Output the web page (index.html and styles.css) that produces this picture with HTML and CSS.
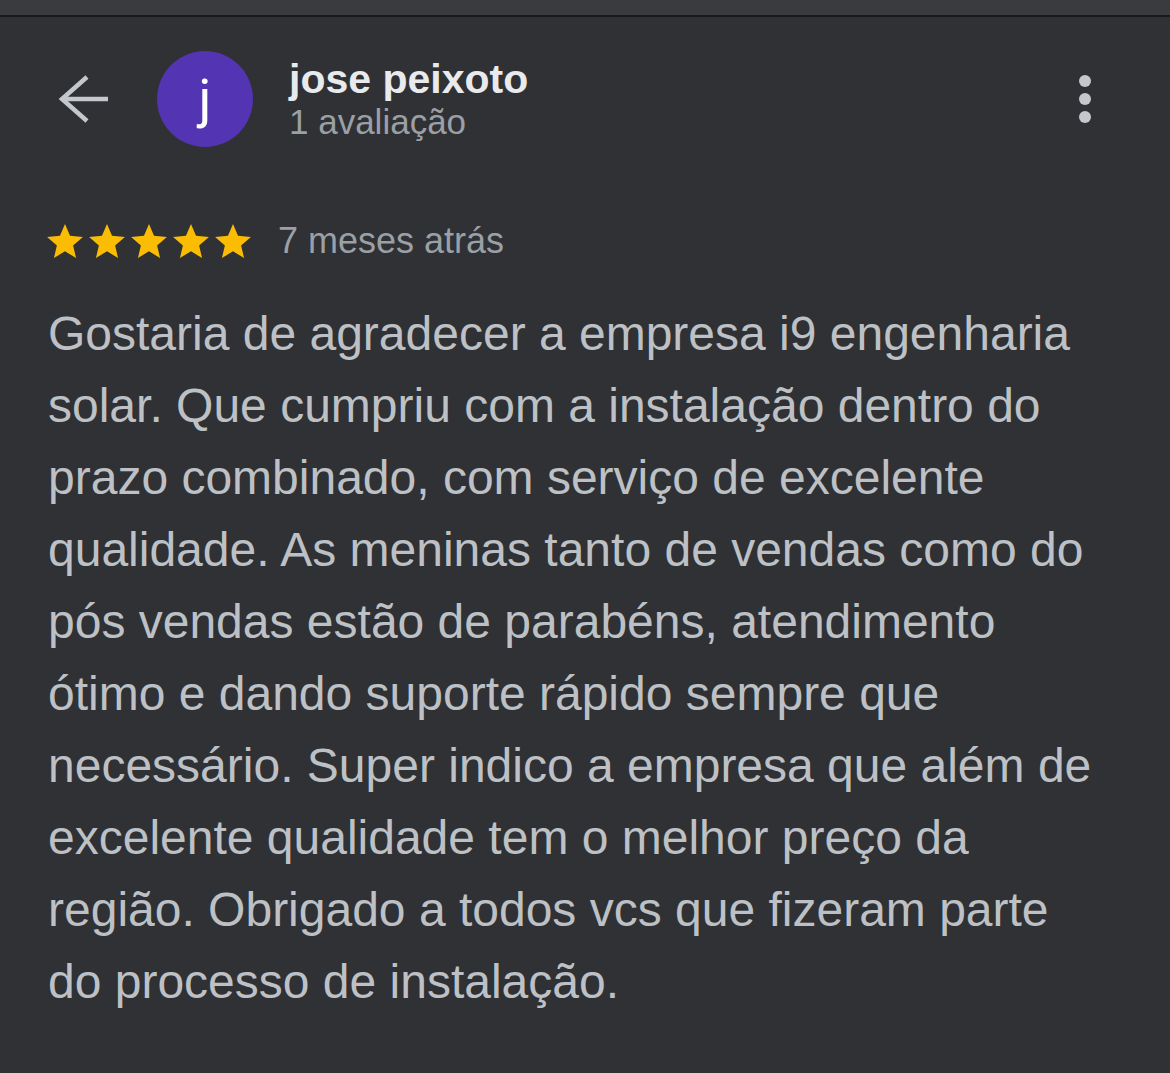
FILE: index.html
```html
<!DOCTYPE html>
<html lang="pt">
<head>
<meta charset="utf-8">
<title>jose peixoto</title>
<link rel="stylesheet" href="styles.css">
</head>
<body>
<div class="topbar"></div>
<header class="header">
  <svg class="back" width="52" height="52" viewBox="0 0 52 52" aria-hidden="true">
    <path d="M50 26 H5" stroke="#c4c7cc" stroke-width="4.5" fill="none"/>
    <path d="M29 4 L4 26 L29 48" stroke="#c4c7cc" stroke-width="4.5" fill="none" stroke-linejoin="miter"/>
  </svg>
  <div class="avatar">j</div>
  <div class="who">
    <div class="name">jose peixoto</div>
    <div class="count">1 avaliação</div>
  </div>
  <div class="menu"><span></span><span></span><span></span></div>
</header>
<div class="meta">
  <div class="stars">
    <svg class="star" viewBox="2 2 20 19"><path d="M12 17.27L18.18 21l-1.64-7.03L22 9.24l-7.19-.61L12 2 9.19 8.63 2 9.24l5.46 4.73L5.82 21z"/></svg>
    <svg class="star" viewBox="2 2 20 19"><path d="M12 17.27L18.18 21l-1.64-7.03L22 9.24l-7.19-.61L12 2 9.19 8.63 2 9.24l5.46 4.73L5.82 21z"/></svg>
    <svg class="star" viewBox="2 2 20 19"><path d="M12 17.27L18.18 21l-1.64-7.03L22 9.24l-7.19-.61L12 2 9.19 8.63 2 9.24l5.46 4.73L5.82 21z"/></svg>
    <svg class="star" viewBox="2 2 20 19"><path d="M12 17.27L18.18 21l-1.64-7.03L22 9.24l-7.19-.61L12 2 9.19 8.63 2 9.24l5.46 4.73L5.82 21z"/></svg>
    <svg class="star" viewBox="2 2 20 19"><path d="M12 17.27L18.18 21l-1.64-7.03L22 9.24l-7.19-.61L12 2 9.19 8.63 2 9.24l5.46 4.73L5.82 21z"/></svg>
  </div>
  <span class="when">7 meses atrás</span>
</div>
<p class="review">Gostaria de agradecer a empresa i9 engenharia solar. Que cumpriu com a instalação dentro do prazo combinado, com serviço de excelente qualidade. As meninas tanto de vendas como do pós vendas estão de parabéns, atendimento ótimo e dando suporte rápido sempre que necessário. Super indico a empresa que além de excelente qualidade tem o melhor preço da região. Obrigado a todos vcs que fizeram parte do processo de instalação.</p>
</body>
</html>
```

FILE: styles.css
```css
html, body {
  margin: 0;
  padding: 0;
}
body {
  background: #303134;
  font-family: "Liberation Sans", Arial, Helvetica, sans-serif;
  width: 1170px;
  height: 1073px;
  overflow: hidden;
}
.topbar {
  height: 15px;
  background: #3a3b3e;
  border-bottom: 2px solid #19191b;
}
.header {
  display: flex;
  align-items: center;
  padding: 34px 79px 0 58px;
}
.back {
  flex: none;
  display: block;
}
.avatar {
  flex: none;
  width: 96px;
  height: 96px;
  margin-left: 47px;
  border-radius: 50%;
  background: #5334b2;
  color: #ffffff;
  font-family: Roboto, "Liberation Sans", sans-serif;
  font-size: 54px;
  line-height: 96px;
  text-align: center;
}
.who {
  flex: 1;
  margin-left: 36px;
}
.name {
  font-size: 41px;
  line-height: 46px;
  font-weight: 700;
  color: #e8eaed;
}
.count {
  font-size: 35px;
  line-height: 40px;
  color: #9aa0a6;
}
.menu {
  display: flex;
  flex-direction: column;
  gap: 6px;
}
.menu span {
  width: 12px;
  height: 12px;
  border-radius: 50%;
  background: #c4c7cc;
}
.meta {
  display: flex;
  align-items: center;
  height: 40px;
  margin-top: 74px;
  padding-left: 47px;
}
.stars {
  display: flex;
  gap: 6px;
}
.star {
  width: 36px;
  height: 34px;
  fill: #fbbc04;
  display: block;
}
.when {
  margin-left: 27px;
  font-size: 36px;
  line-height: 40px;
  color: #9aa0a6;
}
.review {
  margin: 37px 0 0;
  padding: 0 55px 0 48px;
  font-size: 48px;
  line-height: 72px;
  color: #bdc1c6;
}
```
